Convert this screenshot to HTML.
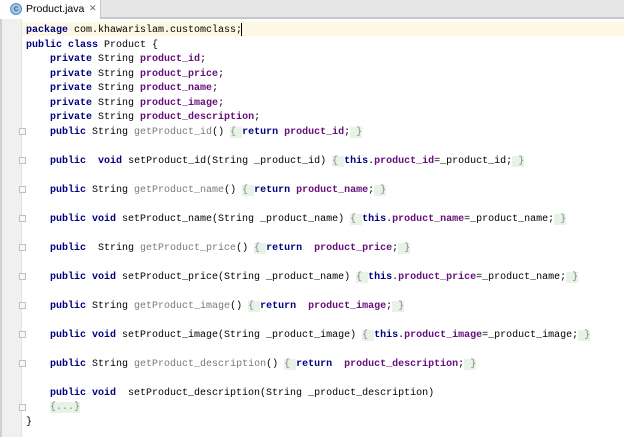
<!DOCTYPE html>
<html><head><style>
html,body{margin:0;padding:0;width:624px;height:437px;overflow:hidden;background:#fff;}
.tabbar{position:absolute;left:0;top:0;width:624px;height:17px;background:#e6e6e6;border-bottom:2px solid #c8c8c8;}
.tab{position:absolute;left:0;top:0;width:100px;height:19px;background:#fff;border-right:1px solid #c8c8c8;font-family:"Liberation Sans",sans-serif;font-size:10.5px;}
.tab .ic{position:absolute;left:10px;top:3px;width:12px;height:12px;border-radius:50%;background:#9cc3e8;border:1px solid #5a8cc0;box-sizing:border-box;font-size:8px;line-height:10px;text-align:center;color:#234;}
.tab .t{position:absolute;left:26px;top:3px;color:#000;}
.tab .x{position:absolute;left:89px;top:3px;color:#666;font-size:9px;}
.gutter{position:absolute;left:0;top:19px;width:22px;height:418px;background:#f0f0f0;border-left:2px solid #d0d0d0;box-sizing:border-box;border-right:1px solid #e2e2e2;}
.hl{position:absolute;left:22px;top:22px;width:602px;height:14px;background:#fdf8e3;}
.code{position:absolute;left:26px;top:24px;font-family:"Liberation Mono",monospace;font-size:10px;line-height:14.5px;white-space:pre;color:#000;}
.k{color:#000080;font-weight:bold;}
.f{color:#660e7a;font-weight:bold;}
.g{color:#7a7a7a;}
.b{background:#e6f3e6;color:#888;}
.fold{position:absolute;left:19px;width:5px;height:5px;border:1px solid #c0c0c0;background:#f8f8f8;}
.cur{position:absolute;left:241px;top:23px;width:1px;height:13px;background:#000;}
</style></head><body>
<div class="tabbar"></div>
<div class="tab"><div class="ic">c</div><div class="t">Product.java</div><div class="x">✕</div></div>
<div class="gutter"></div>
<div class="hl"></div>
<div class="fold" style="top:128px"></div>
<div class="fold" style="top:157px"></div>
<div class="fold" style="top:186px"></div>
<div class="fold" style="top:215px"></div>
<div class="fold" style="top:244px"></div>
<div class="fold" style="top:273px"></div>
<div class="fold" style="top:302px"></div>
<div class="fold" style="top:331px"></div>
<div class="fold" style="top:360px"></div>
<div class="fold" style="top:404px"></div>
<div class="code"><span class="k">package</span> com.khawarislam.customclass;
<span class="k">public class</span> Product {
    <span class="k">private</span> String <span class="f">product_id</span>;
    <span class="k">private</span> String <span class="f">product_price</span>;
    <span class="k">private</span> String <span class="f">product_name</span>;
    <span class="k">private</span> String <span class="f">product_image</span>;
    <span class="k">private</span> String <span class="f">product_description</span>;
    <span class="k">public</span> String <span class="g">getProduct_id</span>() <span class="b">{ </span><span class="k">return</span> <span class="f">product_id</span>;<span class="b"> }</span>

    <span class="k">public</span>  <span class="k">void</span> setProduct_id(String _product_id) <span class="b">{ </span><span class="k">this</span>.<span class="f">product_id</span>=_product_id;<span class="b"> }</span>

    <span class="k">public</span> String <span class="g">getProduct_name</span>() <span class="b">{ </span><span class="k">return</span> <span class="f">product_name</span>;<span class="b"> }</span>

    <span class="k">public void</span> setProduct_name(String _product_name) <span class="b">{ </span><span class="k">this</span>.<span class="f">product_name</span>=_product_name;<span class="b"> }</span>

    <span class="k">public</span>  String <span class="g">getProduct_price</span>() <span class="b">{ </span><span class="k">return</span>  <span class="f">product_price</span>;<span class="b"> }</span>

    <span class="k">public void</span> setProduct_price(String _product_name) <span class="b">{ </span><span class="k">this</span>.<span class="f">product_price</span>=_product_name;<span class="b"> }</span>

    <span class="k">public</span> String <span class="g">getProduct_image</span>() <span class="b">{ </span><span class="k">return</span>  <span class="f">product_image</span>;<span class="b"> }</span>

    <span class="k">public void</span> setProduct_image(String _product_image) <span class="b">{ </span><span class="k">this</span>.<span class="f">product_image</span>=_product_image;<span class="b"> }</span>

    <span class="k">public</span> String <span class="g">getProduct_description</span>() <span class="b">{ </span><span class="k">return</span>  <span class="f">product_description</span>;<span class="b"> }</span>

    <span class="k">public void</span>  setProduct_description(String _product_description)
    <span class="b">{...}</span>
}</div>
<div class="cur"></div>
</body></html>
